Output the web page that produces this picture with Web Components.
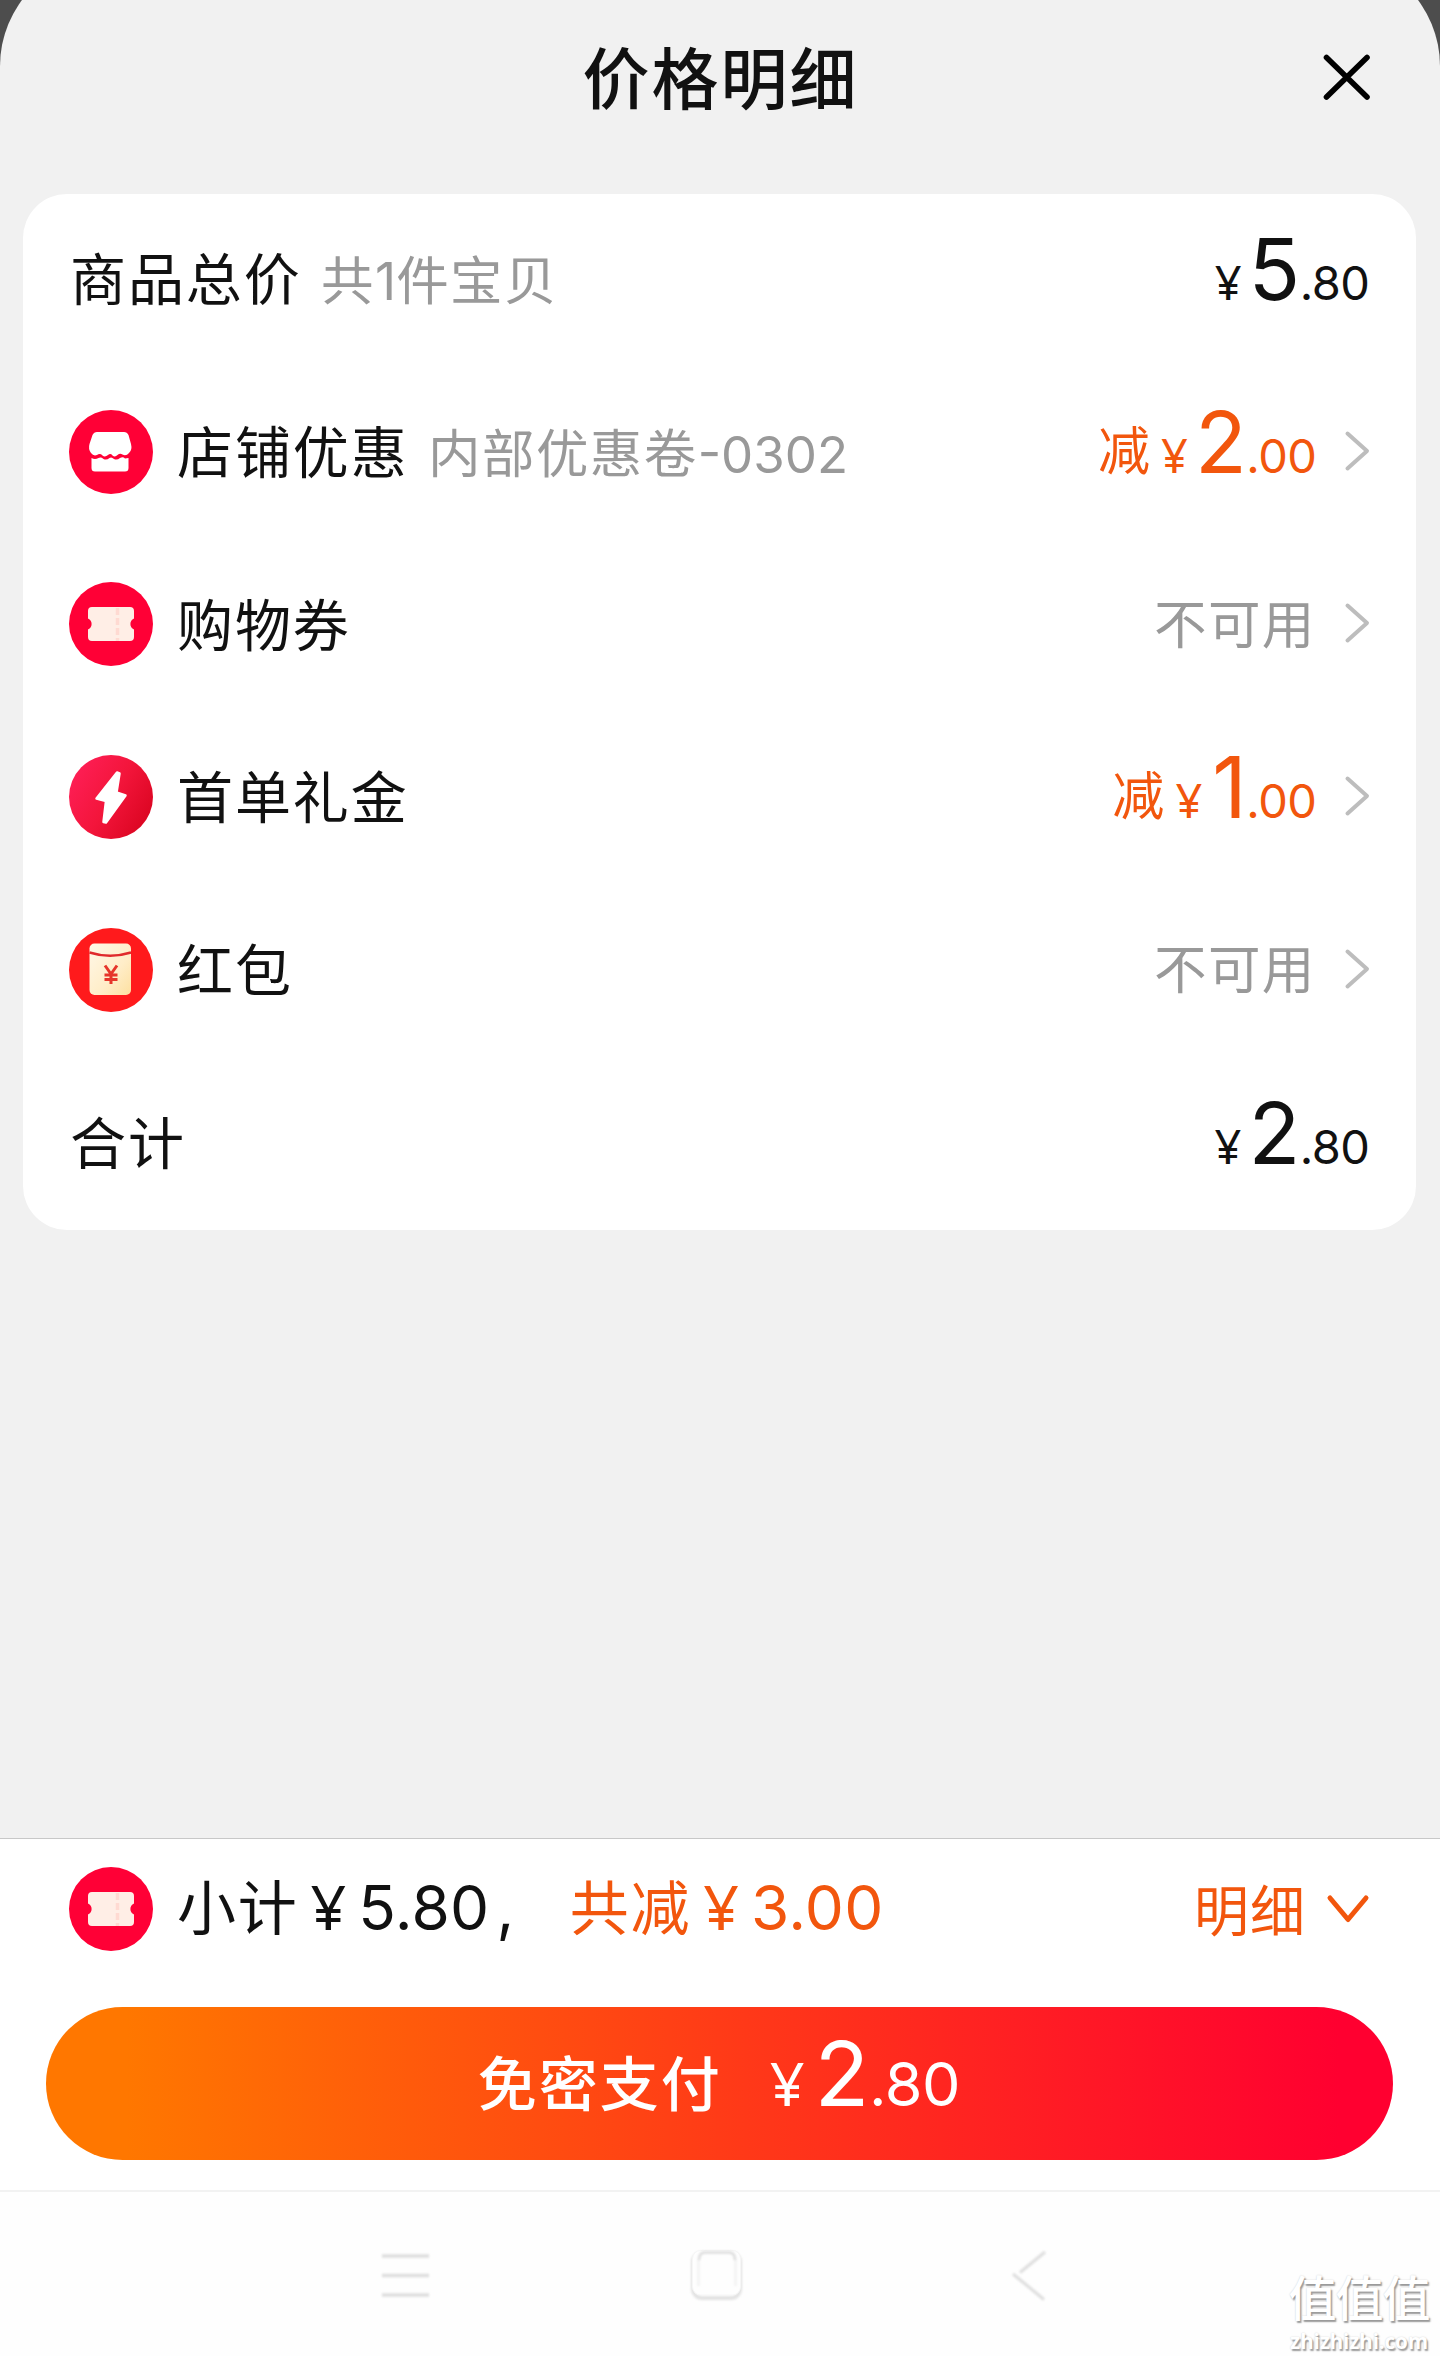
<!DOCTYPE html>
<html lang="zh-CN">
<head>
<meta charset="utf-8">
<title>价格明细</title>
<style>
html,body{margin:0;padding:0}
body{width:1440px;height:2356px;overflow:hidden;background:#4d4d4d;font-family:"Noto Sans CJK SC",sans-serif;color:#111}
</style>
</head>
<body>
<price-page></price-page>
<script>
const define = (name, html) => customElements.define(name, class extends HTMLElement {
  connectedCallback() {
    if (this.shadowRoot) return;
    const root = this.attachShadow({ mode: 'open' });
    const t = document.createElement('template');
    t.innerHTML = typeof html === 'function' ? html(this) : html;
    root.append(t.content.cloneNode(true));
  }
});

const ticket = `<circle cx="42" cy="42" r="42" fill="#ff0036"/>
  <path d="M23 25H61Q65 25 65 29V36.500A6 6 0 0 0 65 47.500V55Q65 59 61 59H23Q19 59 19 55V47.500A6 6 0 0 0 19 36.500V29Q19 25 23 25Z" fill="#ffeee6"/>
  <path d="M48.500 26V59" stroke="#ffdad2" stroke-width="3.500" stroke-dasharray="7 3"/>`;
const badges = {
  ticket,
  shop: `<circle cx="42" cy="42" r="42" fill="#ff0036"/>
    <path d="M28 22H55Q58 22 59.500 25L62 34Q63.500 40 60 43Q57 46.500 53.500 44.500Q51 43 48.500 45Q46 47.500 43.500 45.500Q41.500 43 39 45Q36 47.500 33.500 45.500Q31 43 28 45Q24.500 46.500 22 43Q19 39 20.500 34L23.500 25Q25 22 28 22Z" fill="#fff"/>
    <path d="M22.500 48Q26 50 29.500 48Q32 46.800 34.500 49Q37.500 50.500 40.500 48Q42.500 46.500 45 49Q48 50.500 51 48Q54 46.500 56 48.500L59.500 48V58Q59.500 61.500 56 61.500H26Q22.500 61.500 22.500 58Z" fill="#fff"/>`,
  bolt: `<defs><linearGradient id="g" x1="0" x2="1" y1=".2" y2=".8"><stop stop-color="#ff1f57"/><stop offset=".5" stop-color="#f3153b"/><stop offset="1" stop-color="#d9041f"/></linearGradient></defs>
    <circle cx="42" cy="42" r="42" fill="url(#g)"/>
    <path d="M48 17.500L50.500 18.500L47.500 37.500L56.500 40.500L37 67.500L34.500 67L37 46L27.500 43.500Z" fill="#fff" stroke="#fff" stroke-width="2.500" stroke-linejoin="round"/>`,
  packet: `<defs><linearGradient id="p" x1="0" x2="1" y1="0" y2="1"><stop stop-color="#fff8e8"/><stop offset=".6" stop-color="#ffedc8"/><stop offset="1" stop-color="#fde0a0"/></linearGradient></defs>
    <circle cx="42" cy="42" r="42" fill="#ff1a1c"/>
    <rect x="20.500" y="15.500" width="41.500" height="51.500" rx="5" fill="url(#p)"/>
    <path d="M20.500 24.500Q41 31 62 24.500" fill="none" stroke="#e02a2c" stroke-width="2.400"/>
    <path d="M36 37.500L42 46L48 37.500M42 46V56M35.500 47H48.500M35.500 51.500H48.500" fill="none" stroke="#e6352a" stroke-width="3"/>`
};
define('round-badge', el => `<style>:host{display:block;width:84px;height:84px;flex:none}svg{display:block}</style>
  <svg width="84" height="84" viewBox="0 0 84 84">${badges[el.getAttribute('kind')]}</svg>`);

define('chevron-right', `<style>:host{display:block;flex:none;width:28px;height:44px}svg{display:block}</style>
  <svg width="28" height="44" viewBox="0 0 28 44"><path d="M4.500 4.500L24 22L4.500 39.500" fill="none" stroke="#bdbdbd" stroke-width="4" stroke-linecap="round" stroke-linejoin="round"/></svg>`);

define('price-amount', el => `<style>
  :host{display:flex;align-items:baseline;font-family:Inter,sans-serif;line-height:1;white-space:nowrap}
  .s{font-family:"Noto Sans",sans-serif;font-size:var(--small,47px);margin-right:var(--gap,7px)}
  .i{font-size:var(--big,85px)}
  .i.one{margin-left:3px}
  .d{font-size:var(--small,47px);letter-spacing:-.500px;margin:0 1.500px 0 -.500px}
  </style><span class="s">¥</span><span class="i ${el.getAttribute('whole') === '1' ? 'one' : ''}">${el.getAttribute('whole')}</span><span class="d">${el.getAttribute('cents')}</span>`);

define('price-row', el => `<style>
  :host{display:flex;align-items:center;flex:1 1 0;min-height:0;padding:0 45px 0 47px}
  round-badge{margin:-3px 24px 0 -1px}
  .t{display:flex;align-items:baseline;flex:1;margin-top:-8px;white-space:nowrap;line-height:80px}
  .label{font-size:56px;letter-spacing:1.900px}
  .note{font-size:52.500px;letter-spacing:1.400px;color:#999;margin-left:19.500px}
  ::slotted(chevron-right){margin:-5px 0 0 25px}
  </style>${el.hasAttribute('icon') ? `<round-badge kind="${el.getAttribute('icon')}"></round-badge>` : ''}
  <div class="t"><span class="label">${el.getAttribute('label')}</span><span class="note"><slot name="note"></slot></span></div>
  <slot></slot>`);

define('minus-amount', el => `<style>
  :host{display:flex;align-items:baseline;color:#f2560d;margin-top:-22px}
  div{font-size:52px;line-height:1;margin-right:11px}
  span{vertical-align:3px}
  </style><div><span>减</span></div><price-amount whole="${el.getAttribute('whole')}" cents=".00"></price-amount>`);

define('unavailable-text', `<style>:host{display:block;font-size:52.500px;letter-spacing:1.300px;line-height:80px;color:#999;margin:-10px 2.500px 0 0}</style>不可用`);

define('price-card', `<style>
  :host{display:flex;flex-direction:column;box-sizing:border-box;margin:0 24px 0 23px;height:1036px;background:#fff;border-radius:44px}
  .num{font-family:Inter,sans-serif;font-size:51px;letter-spacing:0;line-height:0}
  .one{font-family:Inter,sans-serif;font-size:52px;letter-spacing:0;line-height:0}
  .plain{margin-top:-21px}
  </style>
  <price-row label="商品总价"><span slot="note">共<span class="one">1</span>件宝贝</span><price-amount class="plain" whole="5" cents=".80"></price-amount></price-row>
  <price-row icon="shop" label="店铺优惠"><span slot="note">内部优惠卷<span class="num">-0302</span></span><minus-amount whole="2"></minus-amount><chevron-right></chevron-right></price-row>
  <price-row icon="ticket" label="购物券"><unavailable-text></unavailable-text><chevron-right></chevron-right></price-row>
  <price-row icon="bolt" label="首单礼金"><minus-amount whole="1"></minus-amount><chevron-right></chevron-right></price-row>
  <price-row icon="packet" label="红包"><unavailable-text></unavailable-text><chevron-right></chevron-right></price-row>
  <price-row label="合计"><price-amount class="plain" whole="2" cents=".80"></price-amount></price-row>`);

define('sheet-header', `<style>
  :host{display:grid;grid-template-columns:1fr auto 1fr;align-items:center;height:154px;margin-bottom:40px}
  h1{grid-column:2;margin:-4px 0 0 1px;font-size:67px;font-weight:500;letter-spacing:2px;line-height:100px;white-space:nowrap}
  svg{justify-self:end;margin-right:67px}
  </style><h1>价格明细</h1>
  <svg width="52" height="52" viewBox="0 0 52 52"><path d="M5.500 6.500L46 46M46 6.500L5.500 46" stroke="#000" stroke-width="5.600" stroke-linecap="round"/></svg>`);

define('summary-line', `<style>
  :host{display:flex;align-items:center;height:142px;padding:0 69px;font-size:59px;letter-spacing:1.800px;white-space:nowrap}
  round-badge{margin:-2px 24px 0 0}
  .t{display:flex;align-items:baseline;line-height:90px;margin-top:-10px}
  .n{font-family:Inter,sans-serif;font-size:62px;letter-spacing:.300px;line-height:1}
  .y{font-family:"Noto Sans",sans-serif;font-size:62.500px;letter-spacing:0;line-height:1;margin:0 12px}
  .comma{margin-left:7px}
  .o{color:#f2560d}
  .saved{margin-left:55px}
  .more{margin-left:auto;font-size:55px;letter-spacing:1px;margin-top:-7px}
  svg{margin-left:19px}
  </style><round-badge kind="ticket"></round-badge>
  <div class="t"><span>小计</span><span class="y">¥</span><span class="n">5.80</span><span class="n comma">,</span></div>
  <div class="t o saved"><span>共减</span><span class="y">¥</span><span class="n">3.00</span></div>
  <div class="t o more">明细</div>
  <svg width="46" height="34" viewBox="0 0 46 34"><path d="M5 5L23 26.500L41 5" fill="none" stroke="#f2560d" stroke-width="5" stroke-linecap="round" stroke-linejoin="round"/></svg>`);

define('pay-button', `<style>
  :host{display:flex;align-items:center;justify-content:center;height:153px;margin:26px 47px 0 46px;border-radius:77px;background:linear-gradient(90deg,#ff7700 6%,#ff3b17 50%,#ff0030 96%);color:#fff}
  .t{display:flex;align-items:baseline;margin-top:-12px;line-height:90px}
  .l{font-size:59px;font-weight:500;letter-spacing:2px;margin-right:48px}
  price-amount{--small:61px;--big:90px;--gap:10px}
  </style><div class="t"><span class="l">免密支付</span><price-amount whole="2" cents=".80"></price-amount></div>`);

define('checkout-bar', `<style>
  :host{display:block;box-sizing:border-box;height:352px;border-top:1px solid #c8c8c8;background:#fff}
  </style><summary-line></summary-line><pay-button></pay-button>`);

define('site-mark', `<style>
  :host{display:flex;flex-direction:column;align-items:center;position:absolute;right:9px;bottom:1px;width:144px;color:#fff;text-shadow:1.500px 1.500px 1.500px #999,0 0 1.500px #ccc;white-space:nowrap}
  b{font-size:48px;line-height:50px;letter-spacing:-1px;font-weight:500;margin-bottom:7px}
  span{font:bold 20.500px/28px "Noto Sans",sans-serif}
  </style><b>值值值</b><span>zhizhizhi.com</span>`);

define('system-nav', `<style>
  :host{display:flex;position:relative;align-items:flex-start;box-sizing:border-box;height:166px;border-top:2px solid #f2f2f2;background:#fefefe;padding:50px 0 0 375.500px}
  svg{display:block;margin-right:253px;overflow:visible}
  .soft{filter:blur(1px)}
  </style>
  <svg width="58" height="64" viewBox="0 0 58 64"><path class="soft" d="M6 14H53M6 33.500H53M6 53H53" stroke="#dedede" stroke-width="3.500"/></svg>
  <svg width="58" height="64" viewBox="0 0 58 64"><rect class="soft" x="6" y="11" width="47" height="45" rx="9" fill="none" stroke="#e2e2e2" stroke-width="4"/><rect x="5.500" y="8.500" width="48" height="44.500" rx="8" fill="#fefefe" stroke="#f6f6f6"/><path class="soft" d="M11.500 44V17M48.500 44V17" stroke="#f0f0f0" stroke-width="2"/><path class="soft" d="M12 18Q12 10.500 18 10.500H42Q48 10.500 48 18" fill="none" stroke="#dcdcdc" stroke-width="2.500"/></svg>
  <svg width="58" height="64" viewBox="0 0 58 64"><path class="soft" d="M47 10L22 30.500M15 32L46 57.500" fill="none" stroke="#dedede" stroke-width="3"/></svg>
  <site-mark></site-mark>`);

define('price-page', `<style>
  :host{display:flex;flex-direction:column;width:1440px;height:2356px;overflow:hidden}
  main{box-sizing:border-box;flex:1;min-height:0;background:#f1f1f1;border-radius:110px 110px 0 0;margin-top:-44px;padding-top:44px}
  checkout-bar,system-nav{flex:none}
  </style>
  <main><sheet-header></sheet-header><price-card></price-card></main>
  <checkout-bar></checkout-bar><system-nav></system-nav>`);
</script>
</body>
</html>
